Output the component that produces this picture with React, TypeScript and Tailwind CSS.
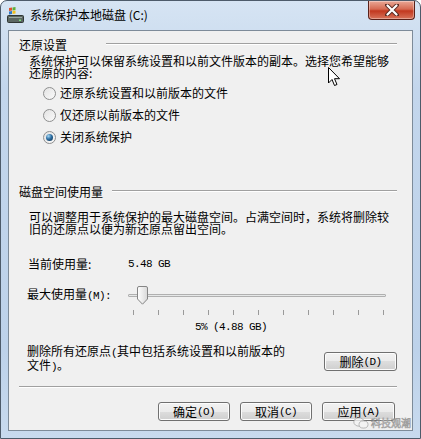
import React from "react";

const cjk = "font-['Noto_Sans_CJK_SC','Liberation_Sans',sans-serif]";

// half-width latin, SimSun style
const L: React.FC<{ children: React.ReactNode }> = ({ children }) => (
  <span className="font-['Liberation_Mono',monospace] text-[11px] tracking-[-0.6px]">{children}</span>
);

const btn =
  "flex items-center justify-center h-[19px] w-[72px] rounded-[3px] border border-[#707070] bg-[linear-gradient(#f2f2f2_0%,#ebebeb_50%,#dddddd_50%,#cfcfcf_100%)] shadow-[inset_0_0_0_1px_#fcfcfc] text-[12px] leading-[12px] text-black";

const Radio: React.FC<{ checked?: boolean; label: string }> = ({ checked, label }) => (
  <div className="flex h-[22px] items-center gap-[4px] pl-[34px]">
    <div className="flex h-[13px] w-[13px] items-center justify-center rounded-full border border-[#8e8f8f] bg-[linear-gradient(135deg,#e3e3e3,#fafafa)]">
      {checked && (
        <div className="h-[7px] w-[7px] rounded-full bg-[radial-gradient(circle_at_35%_30%,#a6d8f5_0%,#2e6fa3_45%,#0c2a44_100%)]" />
      )}
    </div>
    <span className="text-[12px] leading-[12px]">{label}</span>
  </div>
);

const GroupHeader: React.FC<{ title: string; labelClass: string }> = ({ title, labelClass }) => (
  <div className="flex h-[16px] items-center pl-[10px] pr-[15px]">
    <span className={`text-[12px] leading-[12px] ${labelClass}`}>{title}</span>
    <div className="flex-1 -mt-[3px]">
      <div className="h-px bg-[#a0a0a0]" />
      <div className="h-px bg-white" />
    </div>
  </div>
);

const App: React.FC = () => {
  return (
    <div
      className={`relative h-[439px] w-[421px] overflow-hidden rounded-t-[7px] border border-[#4d5b6a] bg-[linear-gradient(#d6e4f3,#c3d6ec_20%,#bdd2ea_80%,#c8daee)] text-black ${cjk}`}
    >
      {/* title bar */}
      <div className="flex h-[29px]">
        <div className="ml-[6px] mt-[6px] flex items-start gap-[6px]">
          <svg width="17" height="16" viewBox="0 0 17 16">
            <path d="M2 1 L5 0.5 L5 3.5 L2 4 Z" fill="#e0502a" />
            <path d="M5.5 0.4 L8.5 0 L8.5 3 L5.5 3.4 Z" fill="#5cae3a" />
            <path d="M2 4.5 L5 4 L5 7 L2 7.5 Z" fill="#2f79c9" />
            <path d="M5.5 3.9 L8.5 3.5 L8.5 6.5 L5.5 6.9 Z" fill="#f2c01e" />
            <rect x="0.5" y="8.5" width="16" height="7" rx="1" fill="#5c6763" stroke="#2f3634" />
            <rect x="2" y="10" width="13" height="1" fill="#9aa8a2" />
            <rect x="12" y="12.5" width="2" height="1.5" fill="#7de07a" />
          </svg>
          <span className="mt-[1px] text-[12px] leading-[14px] text-black">
            系统保护本地磁盘 (C:)
          </span>
        </div>
        <div className="ml-auto mr-[5px] flex h-[19px] w-[47px] items-center justify-center rounded-b-[4px] border border-t-0 border-[#5a2119] bg-[linear-gradient(#e9a896_0%,#d56a52_45%,#c2381f_55%,#d8735a_100%)] shadow-[inset_0_0_0_1px_rgba(255,255,255,0.35)]">
          <svg width="14" height="12" viewBox="0 0 14 12">
            <path d="M2 1 L12 11 M12 1 L2 11" stroke="#5a2a22" strokeWidth="4" strokeLinecap="round" />
            <path d="M2.5 1.5 L11.5 10.5 M11.5 1.5 L2.5 10.5" stroke="#ffffff" strokeWidth="2.2" strokeLinecap="round" />
          </svg>
        </div>
      </div>

      {/* content */}
      <div className="ml-[7px] flex h-[401px] w-[405px] flex-col border border-[#7d8b99] bg-[#f0f0f0]">
        <div className="mt-[6px]">
          <GroupHeader title="还原设置" labelClass="w-[87px]" />
        </div>
        <div className="mt-[2px] pl-[20px] text-[12px] leading-[12px] whitespace-nowrap">
          <div>系统保护可以保留系统设置和以前文件版本的副本。选择您希望能够</div>
          <div>还原的内容:</div>
        </div>
        <div className="mt-[3px]">
          <Radio label="还原系统设置和以前版本的文件" />
          <Radio label="仅还原以前版本的文件" />
          <Radio checked label="关闭系统保护" />
        </div>

        <div className="mt-[36px]">
          <GroupHeader title="磁盘空间使用量" labelClass="mr-[9px]" />
        </div>
        <div className="mt-[11px] pl-[20px] text-[12px] leading-[12px] whitespace-nowrap">
          <div>可以调整用于系统保护的最大磁盘空间。占满空间时，系统将删除较</div>
          <div>旧的还原点以便为新还原点留出空间。</div>
        </div>

        <div className="mt-[21px] flex h-[16px] items-center pl-[19px] text-[12px] leading-[12px]">
          <span className="w-[100px]">当前使用量:</span>
          <L>5.48 GB</L>
        </div>

        <div className="mt-[13px] flex h-[20px] items-center pl-[18px] text-[12px] leading-[12px]">
          <span className="w-[101px]">
            最大使用量<L>(M):</L>
          </span>
          <div className="relative flex h-[20px] w-[258px] items-center">
            <div className="h-[3px] w-full rounded-[1px] border border-[#b0b0b0] bg-[#e6e8e8]" />
            <svg className="absolute left-[9px] top-[1px]" width="11" height="19" viewBox="0 0 11 19">
              <defs>
                <linearGradient id="th" x1="0" y1="0" x2="1" y2="0">
                  <stop offset="0" stopColor="#ffffff" />
                  <stop offset="1" stopColor="#d8d8d8" />
                </linearGradient>
              </defs>
              <path
                d="M0.5 2 Q0.5 0.5 2 0.5 H9 Q10.5 0.5 10.5 2 V13 L5.5 18.2 L0.5 13 Z"
                fill="url(#th)"
                stroke="#858585"
              />
            </svg>
          </div>
        </div>
        <div className="ml-[124px] mt-[5px] flex h-[5px] w-[251px] justify-between">
          {Array.from({ length: 11 }).map((_, i) => (
            <div key={i} className="h-[5px] w-px bg-[#9a9a9a]" />
          ))}
        </div>
        <div className="mt-[2px] h-[12px] pl-[186px] leading-[12px]">
          <L>5% (4.88 GB)</L>
        </div>

        <div className="mt-[16px] flex items-start justify-between pl-[18px] pr-[15px]">
          <div className="text-[12px] leading-[12px] whitespace-nowrap">
            <div>删除所有还原点<L>(</L>其中包括系统设置和以前版本的</div>
            <div>文件<L>)</L>。</div>
          </div>
          <div className={`${btn} mt-[7px] h-[18px] w-[73px]`}>
            删除<L>(D)</L>
          </div>
        </div>

        <div className="ml-[10px] mr-[15px] mt-[13px]">
          <div className="h-px bg-[#a0a0a0]" />
          <div className="h-px bg-white" />
        </div>

        <div className="mt-[14px] flex justify-end gap-[10px] pr-[17px]">
          <div className={`${btn} border-[#3c7fb1] shadow-[inset_0_0_0_1px_#9fd9f5] bg-[linear-gradient(#f0f7fb_0%,#e4f0f7_50%,#d3e6f1_50%,#c6deec_100%)]`}>
            确定<L>(O)</L>
          </div>
          <div className={btn}>
            取消<L>(C)</L>
          </div>
          <div className={`${btn} w-[73px]`}>
            应用<L>(A)</L>
          </div>
        </div>
      </div>

      {/* watermark */}
      <div className="pointer-events-none absolute left-[352px] top-[416px] flex items-center gap-[2px] opacity-80">
        <svg width="16" height="12" viewBox="0 0 16 12">
          <ellipse cx="6" cy="5" rx="5.2" ry="4.2" fill="#f4f4f4" stroke="#9a9a9a" strokeWidth="0.8" />
          <ellipse cx="10.5" cy="7.5" rx="4.5" ry="3.6" fill="#f4f4f4" stroke="#9a9a9a" strokeWidth="0.8" />
        </svg>
        <span className="text-[10px] leading-[10px] text-white [-webkit-text-stroke:0.6px_#8a8a8a]">科技观潮</span>
      </div>

      {/* mouse cursor */}
      <svg className="pointer-events-none absolute left-[327px] top-[66px]" width="13" height="20" viewBox="0 0 13 20">
        <path
          d="M0.5 0.5 V16 L4 12.5 L6.5 18.5 L9 17.5 L6.5 11.7 H11.5 Z"
          fill="#ffffff"
          stroke="#000000"
          strokeWidth="1"
          strokeLinejoin="round"
        />
      </svg>
    </div>
  );
};

export default App;
